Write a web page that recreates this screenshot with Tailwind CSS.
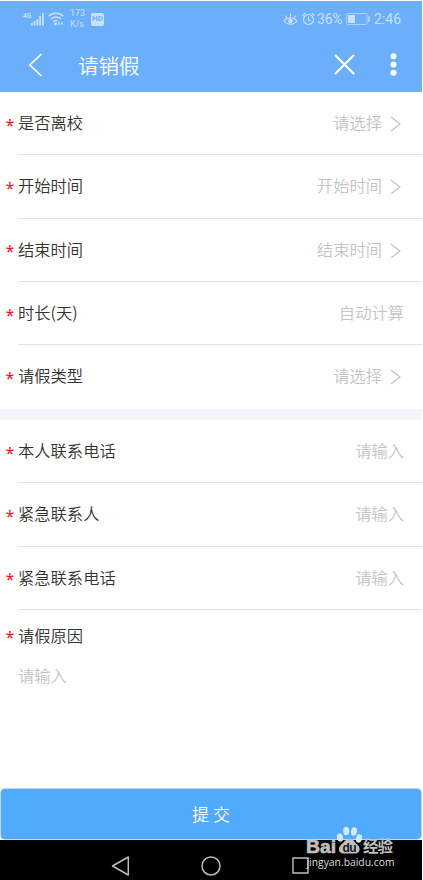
<!DOCTYPE html>
<html lang="zh-CN">
<head>
    <meta charset="UTF-8">
    <meta name="viewport" content="width=device-width, initial-scale=1.0">
    <title>请销假</title>
    <script src="https://cdn.jsdelivr.net/npm/@tailwindcss/browser@4"></script>
</head>
<body class="bg-white font-['Noto_Sans_CJK_SC',sans-serif] font-[350] text-[16.3px] text-[#333]">

    <div class="relative flex flex-col w-[422px] h-[880px] overflow-hidden">

        <!-- 顶部 -->
        <header class="mt-px h-[91px] shrink-0 bg-[#6baef9] text-white">
            <!-- 状态栏 -->
            <div class="flex h-9 items-center justify-between pl-[23px] pr-[21px] font-[Roboto,sans-serif] text-[#c9e0fc]">
                <div class="flex items-center">
                    <svg class="w-[22px] h-[16px]" viewBox="0 0 22 16" fill="currentColor">
                        <text x="0" y="6.5" font-size="7" font-weight="700" textLength="8" lengthAdjust="spacingAndGlyphs">4G</text>
                        <path d="M7.8 12h1.8v2.5H7.8zM10.6 10h1.8v4.5h-1.8zM13.4 8h1.8v6.5h-1.8zM16.2 5h1.8v9.5h-1.8zM19 2h1.8v12.5H19z"/>
                    </svg>
                    <svg class="ml-[3px] w-[16px] h-[14px]" viewBox="0 0 16 14" fill="none" stroke="currentColor" stroke-width="1.4">
                        <path d="M.6 4.2a10.8 10.8 0 0 1 14.8 0M3 7a7.2 7.2 0 0 1 10 0M5.2 9.7a4 4 0 0 1 4.6-.7"/>
                        <circle cx="7.5" cy="11.7" r=".8" fill="currentColor"/>
                        <path d="M10 11.5h1.6M13 11.5h1.8" stroke-width="2.4"/>
                    </svg>
                    <div class="ml-[6px] w-[18px] text-[9px] leading-[11px] font-normal">
                        <p class="whitespace-nowrap">173</p>
                        <p class="whitespace-nowrap">K/s</p>
                    </div>
                    <span class="ml-[3px] flex h-[13px] w-[13px] items-center justify-center rounded-[2px] bg-[#c9e0fc] text-[8px] leading-none font-bold text-[#6baef9]">HD</span>
                </div>
                <div class="flex items-center text-[14px] leading-none font-normal">
                    <svg class="w-[15px] h-[14px]" viewBox="0 0 15 14" fill="none" stroke="currentColor" stroke-width="1.2">
                        <path d="M1 9C4 5 11 5 14 9C11 13.2 4 13.2 1 9zM7.5 1.5v4M2.2 3.6l1.8 2.6M12.8 3.6l-1.8 2.6"/>
                        <circle cx="7.5" cy="9" r="1.7" fill="currentColor"/>
                    </svg>
                    <svg class="ml-[4px] w-[13px] h-[14px]" viewBox="0 0 13 14" fill="none" stroke="currentColor" stroke-width="1.2">
                        <circle cx="6.5" cy="7.5" r="5"/>
                        <path d="M6.5 4.5v3.3l2 1.5M.6 3.6L3.4 1M12.4 3.6L9.6 1"/>
                    </svg>
                    <span class="ml-[2px] w-[26px] whitespace-nowrap tracking-[-0.2px]">36%</span>
                    <svg class="ml-[3px] w-[24px] h-[12px]" viewBox="0 0 24 12" fill="none" stroke="currentColor">
                        <rect x=".6" y=".5" width="20.4" height="11" rx="1" stroke-opacity=".7"/>
                        <rect x="2" y="2" width="7" height="8" fill="currentColor" stroke="none"/>
                        <path d="M23 3.2v5.6" stroke-width="1.4"/>
                    </svg>
                    <span class="ml-[4px] w-[27px] whitespace-nowrap">2:46</span>
                </div>
            </div>
            <!-- 标题栏 -->
            <div class="flex h-[55px] items-center pl-[28px] pr-[25px]">
                <svg class="w-[15px] h-[24px]" viewBox="0 0 15 24" fill="none" stroke="currentColor" stroke-width="1.6">
                    <path d="M13.5 1L1.8 12l11.7 11"/>
                </svg>
                <h1 class="ml-[35px] pt-px text-[20.5px] leading-none">请销假</h1>
                <svg class="ml-auto w-[21px] h-[21px]" viewBox="0 0 21 21" fill="none" stroke="currentColor" stroke-width="2.2">
                    <path d="M1 1l19 19M20 1L1 20"/>
                </svg>
                <svg class="ml-[35px] w-[7px] h-[23px]" viewBox="0 0 7 23" fill="currentColor">
                    <circle cx="3.5" cy="3.2" r="3"/>
                    <circle cx="3.5" cy="11.5" r="3"/>
                    <circle cx="3.5" cy="19.8" r="3"/>
                </svg>
            </div>
        </header>

        <!-- 请假信息 -->
        <section class="h-[316.5px] shrink-0 leading-none">
            <div class="ml-[18px] flex h-[63.3px] items-center border-b border-[#e2e2e2] pr-[21px] pb-[2px]">
                <span class="-ml-[12.5px] w-[12.5px] pt-[5px] font-['Noto_Sans',sans-serif] text-[16px] font-normal text-[#f00f1f]">*</span>
                <span>是否离校</span>
                <span class="ml-auto text-[#c4c4c4]">请选择</span>
                <svg class="ml-[8px] mt-[4px] w-[11px] h-[16px]" viewBox="0 0 11 16" fill="none" stroke="#c4c4c4" stroke-width="1.3"><path d="M1 1l9 7l-9 7"/></svg>
            </div>
            <div class="ml-[18px] flex h-[63.3px] items-center border-b border-[#e2e2e2] pr-[21px] pb-[2px]">
                <span class="-ml-[12.5px] w-[12.5px] pt-[5px] font-['Noto_Sans',sans-serif] text-[16px] font-normal text-[#f00f1f]">*</span>
                <span>开始时间</span>
                <span class="ml-auto text-[#c4c4c4]">开始时间</span>
                <svg class="ml-[8px] mt-[4px] w-[11px] h-[16px]" viewBox="0 0 11 16" fill="none" stroke="#c4c4c4" stroke-width="1.3"><path d="M1 1l9 7l-9 7"/></svg>
            </div>
            <div class="ml-[18px] flex h-[63.3px] items-center border-b border-[#e2e2e2] pr-[21px] pb-[2px]">
                <span class="-ml-[12.5px] w-[12.5px] pt-[5px] font-['Noto_Sans',sans-serif] text-[16px] font-normal text-[#f00f1f]">*</span>
                <span>结束时间</span>
                <span class="ml-auto text-[#c4c4c4]">结束时间</span>
                <svg class="ml-[8px] mt-[4px] w-[11px] h-[16px]" viewBox="0 0 11 16" fill="none" stroke="#c4c4c4" stroke-width="1.3"><path d="M1 1l9 7l-9 7"/></svg>
            </div>
            <div class="ml-[18px] flex h-[63.3px] items-center border-b border-[#e2e2e2] pr-[18px] pb-[2px]">
                <span class="-ml-[12.5px] w-[12.5px] pt-[5px] font-['Noto_Sans',sans-serif] text-[16px] font-normal text-[#f00f1f]">*</span>
                <span>时长(天)</span>
                <span class="ml-auto text-[#c4c4c4]">自动计算</span>
            </div>
            <div class="ml-[18px] flex h-[63.3px] items-center pr-[21px] pb-[3px]">
                <span class="-ml-[12.5px] w-[12.5px] pt-[5px] font-['Noto_Sans',sans-serif] text-[16px] font-normal text-[#f00f1f]">*</span>
                <span>请假类型</span>
                <span class="ml-auto text-[#c4c4c4]">请选择</span>
                <svg class="ml-[8px] mt-[4px] w-[11px] h-[16px]" viewBox="0 0 11 16" fill="none" stroke="#c4c4c4" stroke-width="1.3"><path d="M1 1l9 7l-9 7"/></svg>
            </div>
        </section>

        <div class="h-[11.5px] shrink-0 bg-[#f4f5fa]"></div>

        <!-- 联系方式 -->
        <section class="shrink-0 leading-none">
            <div class="ml-[18px] flex h-[63.3px] items-center border-b border-[#e2e2e2] pr-[18px] pb-[2px]">
                <span class="-ml-[12.5px] w-[12.5px] pt-[5px] font-['Noto_Sans',sans-serif] text-[16px] font-normal text-[#f00f1f]">*</span>
                <span>本人联系电话</span>
                <span class="ml-auto text-[#c4c4c4]">请输入</span>
            </div>
            <div class="ml-[18px] flex h-[63.3px] items-center border-b border-[#e2e2e2] pr-[18px] pb-[2px]">
                <span class="-ml-[12.5px] w-[12.5px] pt-[5px] font-['Noto_Sans',sans-serif] text-[16px] font-normal text-[#f00f1f]">*</span>
                <span>紧急联系人</span>
                <span class="ml-auto text-[#c4c4c4]">请输入</span>
            </div>
            <div class="ml-[18px] flex h-[63.3px] items-center border-b border-[#e2e2e2] pr-[18px] pb-[2px]">
                <span class="-ml-[12.5px] w-[12.5px] pt-[5px] font-['Noto_Sans',sans-serif] text-[16px] font-normal text-[#f00f1f]">*</span>
                <span>紧急联系电话</span>
                <span class="ml-auto text-[#c4c4c4]">请输入</span>
            </div>
        </section>

        <!-- 请假原因 -->
        <section class="flex-1 pl-[18px] pt-[14px] leading-none">
            <div class="flex h-[22px] items-center">
                <span class="-ml-[12.5px] w-[12.5px] pt-[5px] font-['Noto_Sans',sans-serif] text-[16px] font-normal text-[#f00f1f]">*</span>
                <span>请假原因</span>
            </div>
            <p class="mt-[21px] text-[#c4c4c4]">请输入</p>
        </section>

        <button class="mx-px mb-px h-[50px] shrink-0 rounded-[4px] bg-[#50abff] text-[17px] text-white shadow-[0_0_1px_1px_#c5d3df]">提 交</button>

        <!-- 系统导航键 -->
        <nav class="flex h-[40px] shrink-0 items-center bg-black pt-[11px] pl-[111px]">
            <svg class="w-[19px] h-[20px]" viewBox="0 0 19 20" fill="none" stroke="#bdbdbd" stroke-width="1.5" stroke-linejoin="round"><path d="M17.3 1v18L1.5 10z"/></svg>
            <svg class="ml-[71px] w-[20px] h-[20px]" viewBox="0 0 20 20" fill="none" stroke="#bdbdbd" stroke-width="1.5"><circle cx="10" cy="10" r="9"/></svg>
            <svg class="ml-[71px] w-[17px] h-[17px]" viewBox="0 0 17 17" fill="none" stroke="#bdbdbd" stroke-width="1.4"><path d="M1 1h15v15H1z"/></svg>
        </nav>

        <!-- 水印 -->
        <svg class="absolute left-[300px] top-[824px] w-[110px] h-[48px]" viewBox="0 0 110 48" fill="#c0c0c0">
            <g fill="#d5e9fc">
                <ellipse cx="40" cy="13.5" rx="3" ry="4.2" transform="rotate(-12 40 13.5)"/>
                <ellipse cx="46.2" cy="7" rx="3" ry="4.2"/>
                <ellipse cx="54" cy="7.5" rx="3" ry="4.2" transform="rotate(10 54 7.5)"/>
                <ellipse cx="59" cy="14.5" rx="3" ry="4.2" transform="rotate(15 59 14.5)"/>
            </g>
            <path d="M49.5 14.5c4 0 5.5 4.5 8 6.3c3.5 2.7 2.7 8.8-2.5 8.8H44c-6 0-6.3-6-2.8-8.8c3-2.3 4.3-6.3 8.3-6.3z"/>
            <g font-family="Liberation Sans, sans-serif" font-weight="700">
                <text x="6" y="29" font-size="18" stroke="#c0c0c0" stroke-width=".6" textLength="30" lengthAdjust="spacingAndGlyphs">Bai</text>
                <text x="42.5" y="28" font-size="12" fill="#161616" textLength="14">du</text>
            </g>
            <text x="63" y="28.3" font-size="15.5" font-weight="700" font-family="Noto Sans CJK SC, sans-serif" textLength="30">经验</text>
            <text x="6.5" y="42" font-size="10" font-weight="400" font-family="Open Sans, sans-serif" fill="#dedede" textLength="88" lengthAdjust="spacingAndGlyphs">jingyan.baidu.com</text>
        </svg>
    </div>

</body>
</html>
